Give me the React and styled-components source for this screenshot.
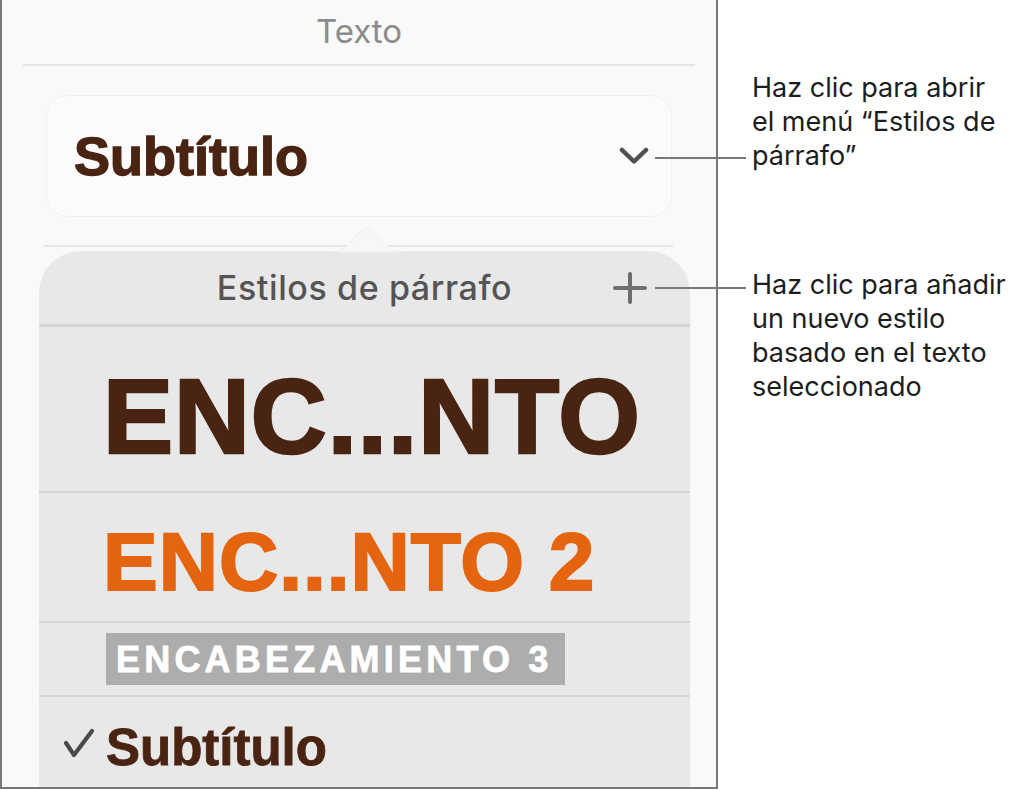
import React from "react";
import styled, { createGlobalStyle } from "styled-components";

const GlobalStyle = createGlobalStyle`
  html, body {
    margin: 0;
    padding: 0;
    background: #ffffff;
  }
  body {
    font-family: "Inter", "Liberation Sans", sans-serif;
  }
`;

const HEADING_FONT = `"Liberation Sans", Arial, sans-serif`;
const BROWN = "#4a2412";

const Page = styled.div`
  display: flex;
  align-items: flex-start;
  width: 1032px;
  height: 790px;
  overflow: hidden;
`;

const Panel = styled.div`
  box-sizing: border-box;
  width: 718px;
  height: 789px;
  flex-shrink: 0;
  display: flex;
  flex-direction: column;
  background: #f9f9f9;
  border: 2px solid #777777;
  border-top: none;
  overflow: hidden;
`;

const PanelTitle = styled.div`
  height: 64px;
  flex-shrink: 0;
  padding-bottom: 3px;
  box-sizing: border-box;
  display: flex;
  align-items: center;
  justify-content: center;
  font-size: 33px;
  font-weight: 400;
  color: #8b8b8b;
`;

const Rule = styled.div`
  height: 2px;
  flex-shrink: 0;
  background: #e6e6e6;
  margin: ${(p) => p.$top || 0}px ${(p) => p.$right}px 0 ${(p) => p.$left}px;
`;

const StyleCard = styled.div`
  box-sizing: border-box;
  height: 122px;
  margin: 29px 44px 0 44px;
  flex-shrink: 0;
  display: flex;
  align-items: center;
  justify-content: space-between;
  padding: 0 22px 0 27px;
  background: #fbfbfb;
  border: 1px solid #f0f0f0;
  border-radius: 22px;
`;

const CardLabel = styled.span`
  font-family: ${HEADING_FONT};
  font-size: 54px;
  font-weight: 700;
  line-height: 1;
  color: ${BROWN};
  -webkit-text-stroke: 1.4px ${BROWN};
`;

const Popover = styled.div`
  position: relative;
  flex: 1;
  min-height: 0;
  margin: 4px 26px 0 37px;
  background: #e8e8e8;
  border-radius: 42px 42px 0 0;
  display: flex;
  flex-direction: column;
`;

const PopoverArrow = styled.svg`
  position: absolute;
  top: -28px;
  left: 293px;
`;

const PopoverHeader = styled.div`
  height: 73px;
  flex-shrink: 0;
  display: grid;
  grid-template-columns: 1fr auto 1fr;
  align-items: center;
  border-bottom: 3px solid #d5d5d5;
`;

const PopoverTitle = styled.span`
  grid-column: 2;
  font-size: 34px;
  font-weight: 500;
  color: #555555;
  letter-spacing: 0.6px;
`;

const AddButton = styled.svg`
  grid-column: 3;
  justify-self: end;
  margin-right: 43px;
`;

/* height is the full row height below the divider; padTop nudges the text down inside it */
const StyleRow = styled.div`
  box-sizing: border-box;
  height: ${(p) => p.$height + (p.$first ? 0 : 2)}px;
  flex-shrink: 0;
  display: flex;
  align-items: ${(p) => p.$align || "center"};
  padding: ${(p) => p.$padTop || 0}px 0 0 ${(p) => p.$padLeft}px;
  border-top: ${(p) => (p.$first ? "none" : "2px solid #d5d5d5")};
`;

const Heading = styled.span`
  font-family: ${HEADING_FONT};
  font-weight: 700;
  font-size: ${(p) => p.$size}px;
  letter-spacing: ${(p) => p.$track || 0}px;
  line-height: 1;
  color: ${(p) => p.$color};
  -webkit-text-stroke: ${(p) => p.$stroke || 0}px ${(p) => p.$color};
  white-space: nowrap;
`;

const BoxedHeading = styled.span`
  display: inline-block;
  height: 52px;
  line-height: 53px;
  padding: 0 12px 0 10px;
  background: #adadad;
  color: #ffffff;
  font-family: ${HEADING_FONT};
  font-weight: 700;
  font-size: 36px;
  letter-spacing: 4.2px;
  -webkit-text-stroke: 0.8px #ffffff;
  white-space: nowrap;
`;

const CheckMark = styled.svg`
  margin: 6px 11px 0 0;
  flex-shrink: 0;
`;

const Notes = styled.div`
  margin-left: 34px;
  padding-top: 71px;
  display: flex;
  flex-direction: column;
`;

const Note = styled.p`
  position: relative;
  margin: ${(p) => p.$gap || 0}px 0 0 0;
  font-size: 27px;
  line-height: 34px;
  color: #1d1d1d;
  white-space: nowrap;

  &::before {
    content: "";
    position: absolute;
    left: -97px;
    top: ${(p) => p.$leader}px;
    width: 91px;
    height: 2px;
    background: #787878;
  }
`;

const Chevron = () => (
  <svg width="30" height="18" viewBox="0 0 30 18">
    <path
      d="M3 3 L15 14.5 L27 3"
      fill="none"
      stroke="#505050"
      strokeWidth="4.5"
      strokeLinecap="round"
      strokeLinejoin="round"
    />
  </svg>
);

const styles = [
  { key: "h1", height: 164, padTop: 15, size: 105, track: 1, stroke: 2.6, color: BROWN, text: "ENC...NTO" },
  { key: "h2", height: 128, padTop: 10, size: 82, track: 1, stroke: 2, color: "#e5640f", text: "ENC...NTO 2" },
];

export default function App() {
  return (
    <>
      <GlobalStyle />
      <Page>
        <Panel>
          <PanelTitle>Texto</PanelTitle>
          <Rule $left={21} $right={21} />

          <StyleCard>
            <CardLabel>Subtítulo</CardLabel>
            <Chevron />
          </StyleCard>

          <Rule $top={28} $left={42} $right={43} />

          <Popover>
            <PopoverArrow width="70" height="30" viewBox="0 0 70 30">
              <path
                d="M0 29 C12 29 18 20 27 10 Q35 1 43 10 C52 20 58 29 70 29 Z"
                fill="#f7f7f6"
                stroke="#eeeeee"
                strokeWidth="1"
              />
            </PopoverArrow>

            <PopoverHeader>
              <PopoverTitle>Estilos de párrafo</PopoverTitle>
              <AddButton width="34" height="32" viewBox="0 0 34 32">
                <path
                  d="M17 2 V30 M2 16 H32"
                  stroke="#6e6e6e"
                  strokeWidth="4"
                  strokeLinecap="round"
                />
              </AddButton>
            </PopoverHeader>

            {styles.map((s, i) => (
              <StyleRow
                key={s.key}
                $first={i === 0}
                $height={s.height}
                $padTop={s.padTop}
                $padLeft={64}
              >
                <Heading
                  $size={s.size}
                  $track={s.track}
                  $stroke={s.stroke}
                  $color={s.color}
                >
                  {s.text}
                </Heading>
              </StyleRow>
            ))}

            <StyleRow $height={72} $padLeft={67}>
              <BoxedHeading>ENCABEZAMIENTO 3</BoxedHeading>
            </StyleRow>

            <StyleRow $height={100} $padTop={25} $padLeft={24} $align="flex-start">
              <CheckMark width="32" height="30" viewBox="0 0 32 30">
                <path
                  d="M3 15 L11 27 L29 3"
                  fill="none"
                  stroke="#4a4a4a"
                  strokeWidth="4.2"
                  strokeLinecap="round"
                  strokeLinejoin="round"
                />
              </CheckMark>
              <Heading $size={51} $stroke={0.8} $color={BROWN}>
                Subtítulo
              </Heading>
            </StyleRow>
          </Popover>
        </Panel>

        <Notes>
          <Note $leader={86}>
            Haz clic para abrir
            <br />
            el menú “Estilos de
            <br />
            párrafo”
          </Note>
          <Note $gap={95} $leader={19}>
            Haz clic para añadir
            <br />
            un nuevo estilo
            <br />
            basado en el texto
            <br />
            seleccionado
          </Note>
        </Notes>
      </Page>
    </>
  );
}
